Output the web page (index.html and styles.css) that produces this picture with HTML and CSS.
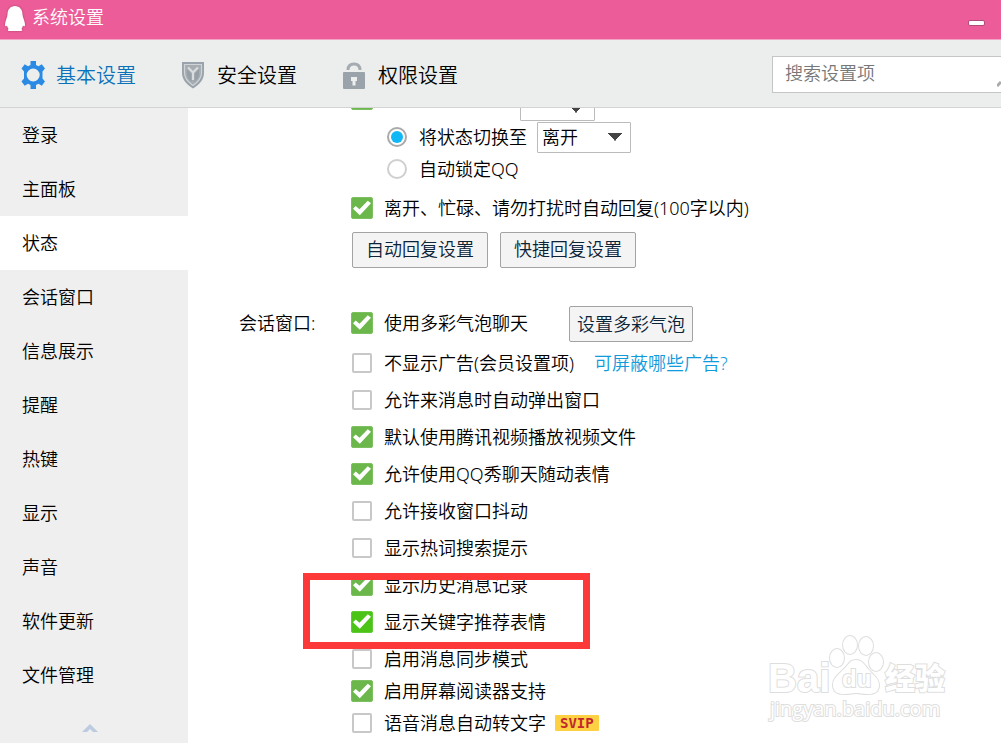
FILE: index.html
```html
<!DOCTYPE html>
<html lang="zh-CN">
<head>
<meta charset="utf-8">
<meta name="viewport" content="width=device-width, initial-scale=1">
<title>系统设置</title>
<link rel="stylesheet" href="styles.css">
</head>
<body>
<div class="app">
  <header class="titlebar">
    <svg class="penguin" viewBox="0 0 22 28" aria-hidden="true">
      <path d="M11 1C6.500 1 3.500 4.500 3.500 9.500C3.500 12.500 1 16 1 19.500C1 21.500 1.800 22 3 20.500C3.300 22 4 23.200 4.600 24C3.500 24.700 3.500 26 5 26H17C18.500 26 18.500 24.700 17.400 24C18 23.200 18.700 22 19 20.500C20.200 22 21 21.500 21 19.500C21 16 18.500 12.500 18.500 9.500C18.500 4.500 15.500 1 11 1Z"/>
    </svg>
    <h1 class="title">系统设置</h1>
    <button class="minimize" type="button" aria-label="最小化"></button>
  </header>

  <div class="toolbar">
    <nav class="tabs">
      <button class="tab tab-active" type="button">
        <svg class="tab-icon" viewBox="0 0 26 28" aria-hidden="true">
          <path fill="#2b8be4" fill-rule="evenodd" d="M10.500 0h5.500v4l2.500 1.300 3.300-2 3.200 4.200-2.500 3v7l2.500 3-3.200 4.200-3.300-2L16 24v4h-5.500v-4L8 22.700l-3.300 2-3.200-4.200 2.500-3v-7l-2.500-3 3.200-4.200 3.300 2L10.500 4zM13.200 7.500a6.500 6.500 0 1 0 0 13a6.500 6.500 0 1 0 0-13z"/>
        </svg>
        <span class="tab-text">基本设置</span>
      </button>
      <button class="tab" type="button">
        <svg class="tab-icon" viewBox="0 0 26 28" aria-hidden="true">
          <path fill="#9aa3ab" d="M1 1h22v11c0 7-5 11.500-11 15.500C6 23.500 1 19 1 12z"/>
          <path fill="#a5adb3" stroke="#d0d4d6" stroke-width="1.200" d="M3.500 3.500h17V12c0 5.500-3.500 9-8.500 12.500C7 21 3.500 17.500 3.500 12z"/>
          <path fill="#7f8991" d="M10.500 13L6 8v5c0 3 2 5.500 4.500 7.500zM13.500 13L18 8v5c0 3-2 5.500-4.500 7.500z" opacity=".4"/>
          <path fill="none" stroke="#d9dcde" stroke-width="2.200" d="M7 6.500L12 11.500l5-5M12 11v8"/>
        </svg>
        <span class="tab-text">安全设置</span>
      </button>
      <button class="tab" type="button">
        <svg class="tab-icon" viewBox="0 0 26 28" aria-hidden="true">
          <path fill="none" stroke="#a4abb1" stroke-width="3" d="M6 9C6 4 9 3 12 3S18 4 18 9"/>
          <rect x="1" y="11" width="22" height="17" rx="1" fill="#9aa2aa"/>
          <path fill="#edefef" d="M9 16h6v4h-1.500v4.500h-3V20H9z"/>
        </svg>
        <span class="tab-text">权限设置</span>
      </button>
    </nav>
    <div class="search">
      <input class="search-input" type="text" placeholder="搜索设置项" aria-label="搜索设置项">
      <svg class="search-icon" viewBox="0 0 4 8" aria-hidden="true"><path d="M0 6L4 2" stroke="#aaa" stroke-width="3"/></svg>
    </div>
  </div>

  <div class="body">
    <nav class="sidebar">
      <a class="item" href="#">登录</a>
      <a class="item" href="#">主面板</a>
      <a class="item item-active" href="#">状态</a>
      <a class="item" href="#">会话窗口</a>
      <a class="item" href="#">信息展示</a>
      <a class="item" href="#">提醒</a>
      <a class="item" href="#">热键</a>
      <a class="item" href="#">显示</a>
      <a class="item" href="#">声音</a>
      <a class="item" href="#">软件更新</a>
      <a class="item" href="#">文件管理</a>
      <button class="collapse" type="button" aria-label="收起">
        <svg class="collapse-icon" viewBox="0 0 16 8" aria-hidden="true"><path d="M0 8L8 0L16 8H11L8 5L5 8Z" fill="#bccbe0"/></svg>
      </button>
    </nav>

    <main class="content">
      <section class="group">
        <div class="options options-status">
          <div class="row-scrolled">
            <input class="check" type="checkbox" checked aria-label="自动切换状态">
            <select class="select select-minutes" aria-label="分钟"><option></option></select>
          </div>
          <div class="row row-radio">
            <input class="radio" type="radio" name="idle" id="idle-away" checked>
            <label for="idle-away">将状态切换至</label>
            <select class="select select-state" aria-label="状态"><option>离开</option></select>
          </div>
          <div class="row row-radio">
            <input class="radio" type="radio" name="idle" id="idle-lock">
            <label for="idle-lock">自动锁定QQ</label>
          </div>
          <label class="row row-reply"><input class="check" type="checkbox" checked>离开、忙碌、请勿打扰时自动回复(100字以内)</label>
          <div class="buttons">
            <button class="button" type="button">自动回复设置</button>
            <button class="button" type="button">快捷回复设置</button>
          </div>
        </div>
      </section>

      <section class="group group-chat">
        <h2 class="group-name">会话窗口:</h2>
        <div class="options">
          <div class="row row-bubble">
            <label class="option option-bubble"><input class="check" type="checkbox" checked>使用多彩气泡聊天</label>
            <button class="button button-small" type="button">设置多彩气泡</button>
          </div>
          <div class="row row-ads">
            <label class="option"><input class="check" type="checkbox">不显示广告(会员设置项)</label>
            <a class="link" href="#">可屏蔽哪些广告?</a>
          </div>
          <label class="row"><input class="check" type="checkbox">允许来消息时自动弹出窗口</label>
          <label class="row"><input class="check" type="checkbox" checked>默认使用腾讯视频播放视频文件</label>
          <label class="row"><input class="check" type="checkbox" checked>允许使用QQ秀聊天随动表情</label>
          <label class="row"><input class="check" type="checkbox">允许接收窗口抖动</label>
          <label class="row"><input class="check" type="checkbox">显示热词搜索提示</label>
          <div class="marked">
            <label class="row"><input class="check" type="checkbox" checked>显示历史消息记录</label>
            <label class="row"><input class="check check-hot" type="checkbox" checked>显示关键字推荐表情</label>
            <div class="marker"></div>
          </div>
          <div class="compact">
            <label class="row"><input class="check" type="checkbox">启用消息同步模式</label>
            <label class="row"><input class="check" type="checkbox" checked>启用屏幕阅读器支持</label>
            <label class="row"><input class="check" type="checkbox">语音消息自动转文字<span class="svip">SVIP</span></label>
          </div>
        </div>
      </section>
    </main>
  </div>

  <svg class="watermark" viewBox="0 0 184 90" aria-hidden="true">
    <g class="mark">
      <ellipse cx="69" cy="23" rx="7" ry="9"/>
      <ellipse cx="82" cy="10" rx="7" ry="9"/>
      <ellipse cx="98" cy="11" rx="7" ry="9"/>
      <ellipse cx="108" cy="27" rx="7" ry="9"/>
      <path d="M88 25c6 0 8 4 12 9s11 9 11 16-5 9-11 9-8-1-12-1-6 1-12 1-11-2-11-9 6-11 11-16 6-9 12-9z"/>
      <text class="mark-latin" x="0" y="57">Bai</text>
      <text class="mark-du" x="74" y="52">du</text>
      <text class="mark-cjk" x="117" y="54">经验</text>
      <text class="mark-url" x="2" y="81">jingyan.baidu.com</text>
    </g>
  </svg>
</div>
</body>
</html>
```
FILE: styles.css
```css
* {
  box-sizing: border-box;
}

body {
  margin: 0;
  font: 350 18px/24px "Noto Sans", "Noto Sans CJK SC", sans-serif;
  color: #000;
  background: #fff;
}

button,
input,
select {
  margin: 0;
  font: inherit;
  color: inherit;
}

.app {
  position: relative;
  display: flex;
  flex-direction: column;
  height: 100vh;
  overflow: hidden;
}

/* Title bar */

.titlebar {
  display: flex;
  align-items: flex-start;
  flex: none;
  height: 40px;
  padding: 5px 16px 0 4px;
  background: #ec5c98;
  border-bottom: 1px solid #f3a3c5;
}

.penguin {
  width: 22px;
  height: 28px;
  fill: #fff;
  filter: drop-shadow(0 0 1px #a8406c);
}

.title {
  margin: 0 auto 0 6px;
  font-size: 18px;
  font-weight: 350;
  line-height: 24px;
  color: #fff;
}

.minimize {
  width: 17px;
  height: 6px;
  margin-top: 15px;
  padding: 0;
  background: #fff;
  border: 1px solid #b04a78;
  border-radius: 2px;
}

/* Toolbar */

.toolbar {
  display: flex;
  align-items: center;
  justify-content: space-between;
  flex: none;
  height: 68px;
  padding: 1px 0 0 20px;
  background: #eceeed;
  border-bottom: 1px solid #d2d4d4;
}

.tabs {
  display: flex;
  gap: 45px;
}

.tab {
  display: flex;
  align-items: center;
  gap: 10px;
  padding: 2px 0 0;
  font-size: 20px;
  line-height: 28px;
  background: none;
  border: 0;
}

.tab-active {
  color: #0b72ba;
}

.tab-icon {
  width: 26px;
  height: 28px;
}

.tab-text {
  padding-top: 2px;
}

.search {
  position: relative;
  flex: 0 0 229px;
}

.search-input {
  display: block;
  width: 100%;
  height: 37px;
  padding: 0 12px 2px;
  background: #fff;
  border: 1px solid #c3c5c6;
  border-right: 0;
  outline: 0;
}

.search-input::placeholder {
  color: #777;
  opacity: 1;
}

.search-icon {
  position: absolute;
  right: 0;
  bottom: 5px;
  width: 4px;
  height: 8px;
}

/* Side navigation */

.body {
  display: flex;
  flex: 1;
  min-height: 0;
}

.sidebar {
  display: flex;
  flex-direction: column;
  flex: 0 0 188px;
  background: #efefef;
}

.item {
  flex: none;
  height: 54px;
  padding-left: 22px;
  line-height: 54px;
  color: #000;
  text-decoration: none;
}

.item-active {
  background: #fff;
}

.collapse {
  display: flex;
  justify-content: center;
  align-items: center;
  flex: 1;
  padding: 10px 9px 0 0;
  background: none;
  border: 0;
}

.collapse-icon {
  width: 16px;
  height: 8px;
}

/* Settings */

.content {
  flex: 1;
  min-width: 0;
  padding-left: 51px;
  overflow: hidden;
}

.group {
  display: grid;
  grid-template-columns: 112px 1fr;
}

.group-chat {
  margin-top: 38px;
}

.group-name {
  margin: 0;
  font-size: 18px;
  font-weight: 350;
  line-height: 34px;
}

.options {
  grid-column: 2;
}

.options-status {
  margin-top: -20px;
}

.row {
  display: flex;
  align-items: center;
  height: 37px;
  white-space: nowrap;
}

.row-scrolled {
  display: flex;
  align-items: flex-start;
  height: 33px;
}

.row-radio {
  height: 32px;
  padding-left: 36px;
}

.row-reply {
  height: 36px;
  margin-top: 5px;
}

.row-bubble {
  gap: 41px;
  height: 36px;
  margin-bottom: 2px;
}

.row-ads {
  gap: 20px;
}

.option {
  display: flex;
  align-items: center;
}

.option-bubble {
  padding-bottom: 3px;
}

.compact {
  margin-top: 3px;
}

.compact .row {
  height: 32px;
}

.check {
  display: grid;
  place-items: center;
  flex: none;
  width: 20px;
  height: 20px;
  margin: 1px 12px 1px 1px;
  appearance: none;
  background: #fff;
  border: 2px solid #c8c8c8;
  border-radius: 2px;
}

.check:checked {
  width: 22px;
  height: 22px;
  margin: 0 11px 0 0;
  background: #6cb74c;
  border: 1px solid #7cc05f;
}

.check:checked::before {
  width: 18px;
  height: 16px;
  background: #fff;
  clip-path: polygon(0 54%, 15% 38%, 36% 58%, 82% 4%, 100% 20%, 38% 96%);
  content: "";
}

.check-hot:checked {
  background: #4cc417;
  border-color: #62cc36;
}

.radio {
  display: grid;
  place-items: center;
  width: 20px;
  height: 20px;
  margin-right: 12px;
  appearance: none;
  background: #fff;
  border: 2px solid #cfcfcf;
  border-radius: 50%;
}

.radio:checked {
  border-color: #aaa;
}

.radio:checked::before {
  width: 12px;
  height: 12px;
  background: #12b7f5;
  border-radius: 50%;
  content: "";
}

.select {
  appearance: none;
  padding: 0 4px;
  background:
    linear-gradient(to bottom right, #444 50%, transparent 51%) right 8px top 10px / 7px 8px no-repeat,
    linear-gradient(to bottom left, #444 50%, transparent 51%) right 15px top 10px / 7px 8px no-repeat,
    #fff;
  border: 1px solid #bbb;
  border-radius: 1px;
}

.select-state {
  width: 94px;
  height: 31px;
  margin-left: 10px;
}

.select-minutes {
  width: 75px;
  height: 31px;
  margin: 2px 0 0 136px;
  background-position: right 11px top 14px, right 18px top 14px, 0 0;
}

.buttons {
  display: flex;
  gap: 12px;
  margin: 6px 0 0 1px;
}

.button {
  height: 36px;
  padding: 0 13px 2px;
  color: #0b2438;
  line-height: 24px;
  background: #f4f4f4;
  border: 1px solid #a3a3a3;
  border-radius: 2px;
}

.button-small {
  padding: 0 7px;
}

.link {
  color: #0f9bdc;
  text-decoration: none;
}

.marked {
  position: relative;
}

.marker {
  position: absolute;
  top: 7px;
  bottom: -9px;
  left: -48px;
  width: 287px;
  border: 7px solid #fc3838;
  pointer-events: none;
}

.svip {
  margin-left: 9px;
  padding: 0 5px;
  font: bold 14px/16px "DejaVu Sans Mono", monospace;
  color: #c1272d;
  background: #fdd142;
  border-radius: 1px;
}

/* Watermark */

.watermark {
  position: absolute;
  right: 49px;
  bottom: 18px;
  width: 184px;
  height: 90px;
  overflow: visible;
  pointer-events: none;
}

.mark {
  fill: #fff;
  stroke: #dedede;
  stroke-width: 2;
  paint-order: stroke;
}

.mark-latin {
  font: bold 40px "Liberation Sans", sans-serif;
}

.mark-du {
  font: bold 24px "Liberation Sans", sans-serif;
}

.mark-cjk {
  font: 900 30px "Noto Sans CJK SC", sans-serif;
}

.mark-url {
  font: 20px "Open Sans", sans-serif;
}
```
